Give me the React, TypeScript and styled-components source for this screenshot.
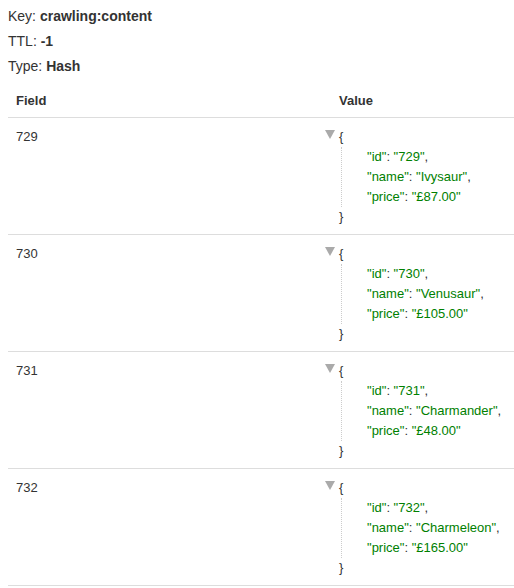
import styled, { createGlobalStyle } from "styled-components";

const GlobalStyle = createGlobalStyle`
  body {
    margin: 0;
    padding: 4px 0 0 8px;
    font-family: "Liberation Sans", Arial, sans-serif;
    color: #333;
    background: #fff;
    overflow: hidden;
  }
`;

const Meta = styled.div`
  font-size: 14px;
  line-height: 25px;
  b {
    font-weight: bold;
  }
`;

const Table = styled.div`
  width: 506px;
  margin-top: 4px;
  font-size: 13px;
`;

const Row = styled.div<{ $head?: boolean }>`
  display: grid;
  grid-template-columns: 323px 1fr;
  border-bottom: 1px solid #ddd;
  font-weight: ${(p: { $head?: boolean }) => (p.$head ? "bold" : "normal")};
`;

const Cell = styled.div`
  padding: 9px 8px 7px 8px;
  line-height: 20px;
  position: relative;
`;

const HeadCell = styled.div`
  padding: 8px 8px 6px 8px;
  line-height: 20px;
`;

const Toggle = styled.span`
  position: absolute;
  left: -6px;
  top: 12px;
  width: 0;
  height: 0;
  border-left: 5px solid transparent;
  border-right: 5px solid transparent;
  border-top: 9px solid #aaa;
`;

const Brace = styled.div`
  color: #333;
  line-height: 20px;
`;

const Body = styled.div`
  margin-left: 2px;
  padding-left: 25px;
  border-left: 1px dotted #ccc;
`;

const Line = styled.div`
  line-height: 20px;
  color: #333;
`;

const Str = styled.span`
  color: #008000;
`;

type Item = { id: string; name: string; price: string };

const items: Item[] = [
  { id: "729", name: "Ivysaur", price: "£87.00" },
  { id: "730", name: "Venusaur", price: "£105.00" },
  { id: "731", name: "Charmander", price: "£48.00" },
  { id: "732", name: "Charmeleon", price: "£165.00" },
];

function JsonValue({ item }: { item: Item }) {
  const entries = Object.entries(item);
  return (
    <>
      <Toggle />
      <Brace>{"{"}</Brace>
      <Body>
        {entries.map(([k, v], i) => (
          <Line key={k}>
            <Str>"{k}"</Str>: <Str>"{v}"</Str>
            {i < entries.length - 1 ? "," : ""}
          </Line>
        ))}
      </Body>
      <Brace>{"}"}</Brace>
    </>
  );
}

export default function App() {
  return (
    <>
      <GlobalStyle />
      <Meta>
        Key: <b>crawling:content</b>
      </Meta>
      <Meta>
        TTL: <b>-1</b>
      </Meta>
      <Meta>
        Type: <b>Hash</b>
      </Meta>
      <Table>
        <Row $head>
          <HeadCell>Field</HeadCell>
          <HeadCell>Value</HeadCell>
        </Row>
        {items.map((it) => (
          <Row key={it.id}>
            <Cell>{it.id}</Cell>
            <Cell>
              <JsonValue item={it} />
            </Cell>
          </Row>
        ))}
      </Table>
    </>
  );
}
